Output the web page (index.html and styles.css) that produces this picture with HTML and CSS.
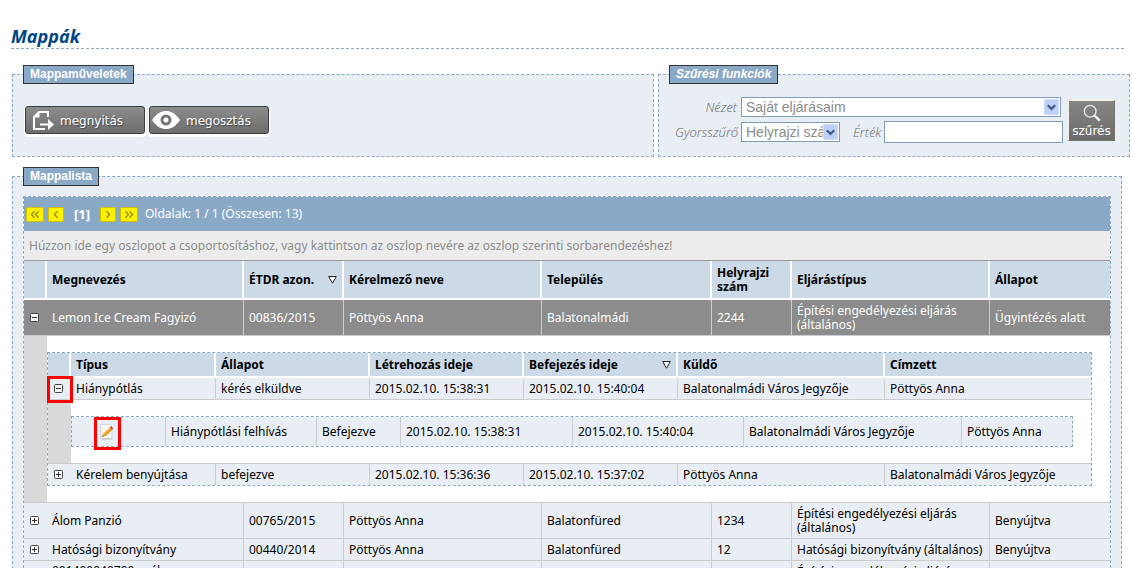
FILE: index.html
```html
<!DOCTYPE html>
<html lang="hu">
<head>
<meta charset="utf-8">
<title>Mappák</title>
<link rel="stylesheet" href="styles.css">
</head>
<body>
<svg class="defs" aria-hidden="true">
  <symbol id="plus" viewBox="0 0 9 9"><rect x=".5" y=".5" width="8" height="8" rx="1" fill="#fff" stroke="#444"/><path d="M2 4.500h5M4.500 2v5" stroke="#333"/></symbol>
  <symbol id="minus" viewBox="0 0 9 9"><rect x=".5" y=".5" width="8" height="8" rx="1" fill="#f4f4f4" stroke="#444"/><path d="M2 4.500h5" stroke="#333"/></symbol>
  <symbol id="sort" viewBox="0 0 9 8"><path d="M.7.500h7.600L4.500 7.200z" fill="#fff" stroke="#222"/></symbol>
  <symbol id="chev" viewBox="0 0 15 16"><rect width="15" height="16" rx="2" fill="#bdd0fb"/><rect x=".5" y=".5" width="14" height="15" rx="1.500" fill="none" stroke="#cfdcfa"/><path d="M3.800 6.200l3.700 3.700 3.700-3.700" fill="none" stroke="#3f5a86" stroke-width="2.200"/></symbol>
</svg>
<main class="page">
  <h1 class="title">Mappák</h1>
  <div class="top">
    <fieldset class="panel">
      <legend>Mappaműveletek</legend>
      <div class="actions">
        <button class="action" type="button">
          <svg class="doc" viewBox="0 0 24 24"><path d="M18 9V4H9L4 9v12h11" fill="none" stroke="#fff" stroke-width="2"/><path d="M4 9.500h5.500V4z" fill="#fff"/><path d="M10 15.500h8V11l6 5.500-6 5.500v-4.500h-8z" fill="#fff"/></svg>
          <span>megnyitás</span>
        </button>
        <button class="action" type="button">
          <svg class="eye" viewBox="0 0 28 20"><path d="M0 10C5 3 9 1 14 1s9 2 14 9c-5 7-9 9-14 9S5 17 0 10z" fill="#fff"/><circle cx="14" cy="10" r="5.500" fill="#777"/><circle cx="14" cy="10" r="2.500" fill="#fff"/></svg>
          <span>megosztás</span>
        </button>
      </div>
    </fieldset>
    <fieldset class="panel">
      <legend class="slanted">Szűrési funkciók</legend>
      <div class="filter">
        <label for="view">Nézet</label>
        <div class="line">
          <span class="pick wide"><select id="view"><option>Saját eljárásaim</option></select><svg><use href="#chev"/></svg></span>
        </div>
        <label for="quick">Gyorsszűrő</label>
        <div class="line">
          <span class="pick short"><select id="quick"><option>Helyrajzi szám</option></select><svg><use href="#chev"/></svg></span>
          <label for="val">Érték</label>
          <input id="val" type="text">
        </div>
        <button class="search" type="button">
          <svg viewBox="0 0 20 20"><circle cx="8" cy="8" r="6.500" fill="none" stroke="#e6e6e6" stroke-width="1.500"/><path d="M12.500 12.500l6 6" stroke="#fff" stroke-width="2.500"/></svg>
          <span>szűrés</span>
        </button>
      </div>
    </fieldset>
  </div>

  <fieldset class="panel list">
    <legend>Mappalista</legend>
    <div class="grid">
      <nav class="pager">
        <button type="button" aria-label="Első"><svg viewBox="0 0 18 16"><path d="M8.500 4l-4 4 4 4M13.500 4l-4 4 4 4"/></svg></button>
        <button class="one" type="button" aria-label="Előző"><svg viewBox="0 0 16 16"><path d="M10 4L6 8l4 4"/></svg></button>
        <b>[1]</b>
        <button class="one" type="button" aria-label="Következő"><svg viewBox="0 0 16 16"><path d="M6 4l4 4-4 4"/></svg></button>
        <button type="button" aria-label="Utolsó"><svg viewBox="0 0 18 16"><path d="M4.500 4l4 4-4 4M9.500 4l4 4-4 4"/></svg></button>
        <span>Oldalak: 1 / 1 (Összesen: 13)</span>
      </nav>
      <p class="hint">Húzzon ide egy oszlopot a csoportosításhoz, vagy kattintson az oszlop nevére az oszlop szerinti sorbarendezéshez!</p>
      <table class="outer">
        <colgroup><col class="w23"><col class="w197"><col class="w100"><col class="w198"><col class="w170"><col class="w80"><col class="w198"><col class="w120"></colgroup>
        <thead>
          <tr><th></th><th>Megnevezés</th><th><span class="sorted">ÉTDR azon.<svg><use href="#sort"/></svg></span></th><th>Kérelmező neve</th><th>Település</th><th>Helyrajzi szám</th><th>Eljárástípus</th><th>Állapot</th></tr>
        </thead>
        <tbody>
          <tr class="tall selected"><td class="tog"><button type="button" aria-label="Bezár"><svg><use href="#minus"/></svg></button></td><td>Lemon Ice Cream Fagyizó</td><td>00836/2015</td><td>Pöttyös Anna</td><td>Balatonalmádi</td><td>2244</td><td>Építési engedélyezési eljárás (általános)</td><td>Ügyintézés alatt</td></tr>
          <tr class="detail">
            <td class="rail"></td>
            <td class="nest" colspan="7">
              <div class="frame">
              <table>
                <colgroup><col class="w23"><col class="w145"><col class="w154"><col class="w154"><col class="w154"><col class="w207"><col class="w206"></colgroup>
                <thead>
                  <tr><th></th><th>Típus</th><th>Állapot</th><th>Létrehozás ideje</th><th><span class="sorted">Befejezés ideje<svg><use href="#sort"/></svg></span></th><th>Küldő</th><th>Címzett</th></tr>
                </thead>
                <tbody>
                  <tr><td class="tog"><button class="marked" type="button" aria-label="Bezár"><svg><use href="#minus"/></svg></button></td><td>Hiánypótlás</td><td>kérés elküldve</td><td>2015.02.10. 15:38:31</td><td>2015.02.10. 15:40:04</td><td>Balatonalmádi Város Jegyzője</td><td>Pöttyös Anna</td></tr>
                  <tr class="detail">
                    <td class="rail"></td>
                    <td class="nest" colspan="6">
                      <div class="frame">
                      <table>
                        <colgroup><col class="w94"><col class="w151"><col class="w84"><col class="w172"><col class="w171"><col class="w218"><col class="w110"></colgroup>
                        <tbody>
                          <tr class="item"><td class="edit"><button class="marked" type="button" aria-label="Szerkesztés"><svg viewBox="0 0 16 16"><path d="M1.500.500h9l2.500 3v12H1.500z" fill="#f7f7f7" stroke="#d3d6da"/><path d="M3 14.500h10" stroke="#c6c8cc"/><path d="M3 13l1.200-3.500 6.600-6.200 2.400 2.400L6.500 12z" fill="#f5b63a"/><path d="M5.300 11.300l7-6.400.9.900-6.700 6.300z" fill="#dc8a1c"/><path d="M10.600 3.400l1.500-1.300 2.300 2.300L13 5.800z" fill="#d9453a"/><path d="M3 13l.6-1.700 1.200 1.200z" fill="#444"/></svg></button></td><td>Hiánypótlási felhívás</td><td>Befejezve</td><td>2015.02.10. 15:38:31</td><td>2015.02.10. 15:40:04</td><td>Balatonalmádi Város Jegyzője</td><td>Pöttyös Anna</td></tr>
                        </tbody>
                      </table>
                      </div>
                    </td>
                  </tr>
                  <tr><td class="tog"><button type="button" aria-label="Kinyit"><svg><use href="#plus"/></svg></button></td><td>Kérelem benyújtása</td><td>befejezve</td><td>2015.02.10. 15:36:36</td><td>2015.02.10. 15:37:02</td><td>Pöttyös Anna</td><td>Balatonalmádi Város Jegyzője</td></tr>
                </tbody>
              </table>
              </div>
            </td>
          </tr>
          <tr class="tall"><td class="tog"><button type="button" aria-label="Kinyit"><svg><use href="#plus"/></svg></button></td><td>Álom Panzió</td><td>00765/2015</td><td>Pöttyös Anna</td><td>Balatonfüred</td><td>1234</td><td>Építési engedélyezési eljárás (általános)</td><td>Benyújtva</td></tr>
          <tr><td class="tog"><button type="button" aria-label="Kinyit"><svg><use href="#plus"/></svg></button></td><td>Hatósági bizonyítvány</td><td>00440/2014</td><td>Pöttyös Anna</td><td>Balatonfüred</td><td>12</td><td>Hatósági bizonyítvány (általános)</td><td>Benyújtva</td></tr>
          <tr class="tall"><td class="tog"></td><td class="upper">001400040700 - cél</td><td></td><td></td><td></td><td></td><td>Építési engedélyezési eljárás (általános)</td><td></td></tr>
        </tbody>
      </table>
    </div>
  </fieldset>
</main>
</body>
</html>
```

FILE: styles.css
```css
* { box-sizing: border-box; }

body {
  margin: 0;
  background: #fff;
  color: #000;
  font: 12px/14px "Noto Sans", "Open Sans", sans-serif;
}

button { padding: 0; border: 0; background: none; }
svg { display: block; }
.defs { position: absolute; width: 0; height: 0; }

.page {
  height: 100vh;
  overflow: hidden;
  padding: 24px 2px 0 11px;
}

.title {
  margin: 0 6px 16px 0;
  border-bottom: 1px dashed #8aa9c7;
  color: #004586;
  font: italic bold 18px/24px "Open Sans", sans-serif;
}

.top {
  display: grid;
  grid-template-columns: 642fr 472fr;
  gap: 4px;
  margin: 0 0 10px 1px;
}

.panel {
  min-width: 0;
  margin: 0;
  padding: 0;
  border: 1px dashed #8aa9c7;
  background: #e9eef5;
}

legend {
  margin-left: 10px;
  padding: 0 6px;
  border: 1px solid #333;
  background: #8aa9c7;
  color: #fff;
  font: bold 12px/17px "Liberation Sans", sans-serif;
}

.slanted { font-style: italic; }

.actions { display: flex; gap: 4px; padding: 22px 12px 0; }

.action {
  display: flex;
  align-items: center;
  width: 120px;
  height: 28px;
  border: 1px solid #3c3c3c;
  border-radius: 3px;
  background: linear-gradient(#8c8c8c, #6e6e6e);
  box-shadow: 0 2px 0 1px #fff;
  color: #fff;
  font: 12px/14px "DejaVu Sans", sans-serif;
  text-shadow: 1px 1px 1px #444;
}

.doc { width: 24px; height: 24px; margin: 0 6px 0 4px; }
.eye { width: 28px; height: 20px; margin: 0 6px 0 2px; }
.action span { padding-top: 1px; }

.filter {
  display: grid;
  grid-template-columns: 62px 1fr 48px;
  grid-template-rows: 20px 22px;
  gap: 4px;
  align-items: center;
  padding: 13px 14px 13px 16px;
}

.filter label {
  color: #666;
  font: italic 300 13px/20px "Open Sans", sans-serif;
  text-align: right;
}

.line { display: flex; align-items: center; min-width: 0; }
.line label { margin: 0 3px 0 13px; }

.pick { position: relative; display: block; }
.wide { flex: 1; margin-right: 2px; }
.short { width: 99px; }

.pick select {
  display: block;
  width: 100%;
  height: 20px;
  padding: 0 16px 0 4px;
  border: 1px solid #7f9db9;
  border-radius: 0;
  background: #fff;
  color: #8c8c8c;
  font: 14px/18px "Liberation Sans", sans-serif;
  appearance: none;
}

.pick svg {
  position: absolute;
  top: 2px;
  right: 2px;
  width: 15px;
  height: 16px;
  pointer-events: none;
}

.line input {
  flex: 1;
  min-width: 0;
  height: 22px;
  border: 1px solid #7f9db9;
  background: #fff;
}

.search {
  grid-area: 1 / 3 / 3 / 4;
  display: flex;
  flex-direction: column;
  align-items: center;
  height: 42px;
  padding-top: 3px;
  border: solid;
  border-width: 2px 1px 1px 2px;
  border-color: #f2f0e8 #77756a #77756a #f2f0e8;
  background: linear-gradient(#858585, #6c6c6c);
  color: #fff;
  font: 12px/18px "DejaVu Sans", sans-serif;
}

.search svg { width: 20px; height: 20px; }

.list { margin: 0 8px 0 1px; }

.grid {
  margin: 10px 10px 20px;
  border: 1px dashed #8aa9c7;
  background: #fff;
}

.pager {
  display: flex;
  align-items: center;
  height: 34px;
  padding-left: 2px;
  background: #8aa9c7;
  color: #fff;
}

.pager button {
  width: 18px;
  height: 15px;
  margin-right: 4px;
  border: 1px solid #d0bf00;
  border-radius: 2px;
  background: #fff200;
}

.pager .one { width: 16px; }
.pager svg { width: 100%; height: 13px; fill: none; stroke: #8f8400; stroke-width: 1.500; }
.pager b { width: 28px; font-size: 13px; text-align: center; margin-right: 4px; }
.pager span { margin-left: 3px; }

.hint {
  height: 30px;
  margin: 0;
  padding-left: 5px;
  border-bottom: 1px solid #999;
  background: #ececec;
  color: #8c8c8c;
  line-height: 29px;
  white-space: nowrap;
  overflow: hidden;
}

table {
  width: 100%;
  border-collapse: separate;
  border-spacing: 0;
  table-layout: fixed;
}

th {
  height: 25px;
  padding: 0 5px;
  border-right: 2px solid #fff;
  border-bottom: 2px solid #fff;
  background: #ccdae7;
  text-align: left;
}

.outer > thead th { height: 39px; }

td {
  height: 22px;
  padding: 0 5px;
  border-right: 1px solid #ccc;
  border-bottom: 1px solid #ccc;
  background: #e9eef5;
}

th:last-child, td:last-child { border-right: 0; }
tbody > tr:last-child > td { height: 21px; border-bottom: 0; }

.outer .tall > td { height: 36px; }
.selected > td { background: #8c8c8c; color: #fff; }
.upper { padding-top: 3px; vertical-align: top; }

.tog { padding: 0 0 0 6px; border-right: 0; }
.tog button { position: relative; display: block; width: 9px; height: 9px; }
.tog svg { width: 9px; height: 9px; }

.sorted { display: flex; justify-content: space-between; align-items: center; white-space: nowrap; }
.sorted svg { width: 9px; height: 8px; }

.detail > .rail { padding: 0; border-right: 0; background: #d9d9d9; }
.detail > .nest { padding: 16px 18px 16px 0; background: #fff; }
.frame { border: 1px dashed #8aa9c7; }

.outer .item > td { height: 29px; }
.edit button { position: relative; display: block; width: 16px; height: 16px; margin-left: 22px; }
.edit svg { width: 16px; height: 16px; }

/* highlight boxes drawn over the marked controls */
.marked::after {
  content: "";
  position: absolute;
  inset: -8px -10px -10px -7px;
  border: 3px solid #f00;
}

.edit .marked::after { inset: -7px -6px -10px -5px; }

.w23 { width: 23px; }
.w80 { width: 80px; }
.w84 { width: 84px; }
.w94 { width: 94px; }
.w100 { width: 100px; }
.w110 { width: 110px; }
.w120 { width: 120px; }
.w145 { width: 145px; }
.w151 { width: 151px; }
.w154 { width: 154px; }
.w170 { width: 170px; }
.w171 { width: 171px; }
.w172 { width: 172px; }
.w197 { width: 197px; }
.w198 { width: 198px; }
.w206 { width: 206px; }
.w207 { width: 207px; }
.w218 { width: 218px; }
```
